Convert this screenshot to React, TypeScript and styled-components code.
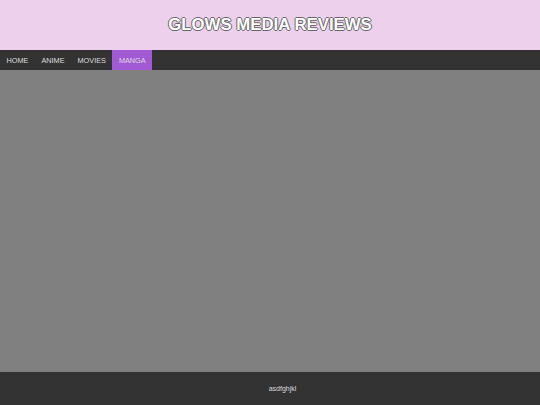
import React from "react";
import styled, { createGlobalStyle } from "styled-components";

const Global = createGlobalStyle`
  html, body { margin: 0; padding: 0; height: 100%; }
  body { font-family: "Liberation Sans", Arial, sans-serif; }
  #root { height: 100%; }
`;

const Page = styled.div`
  display: flex;
  flex-direction: column;
  height: 405px;
  width: 540px;
`;

const Header = styled.header`
  height: 50px;
  background: #ecd0ec;
  display: flex;
  align-items: center;
  justify-content: center;
`;

const Title = styled.h1`
  margin: 0;
  font-size: 16.8px;
  font-weight: bold;
  color: #ffffff;
  text-shadow: -1px 0 #666, 1px 0 #666, 0 -1px #666, 0 1px #666;
`;

const Nav = styled.nav`
  height: 20px;
  background: #333333;
  display: flex;
`;

const NavItem = styled.a<{ $active?: boolean }>`
  display: flex;
  align-items: center;
  padding: 0 6.5px;
  font-size: 7.3px;
  font-weight: normal;
  color: #dddddd;
  text-decoration: none;
  background: ${(p) => (p.$active ? "#a259d4" : "transparent")};
`;

const Main = styled.main`
  flex: 1;
  background: #808080;
`;

const Footer = styled.footer`
  height: 33px;
  background: #333333;
  display: flex;
  align-items: center;
  justify-content: center;
  padding-left: 25px;
  font-size: 7px;
  color: #dddddd;
`;

export default function App() {
  return (
    <>
      <Global />
      <Page>
        <Header>
          <Title>GLOWS MEDIA REVIEWS</Title>
        </Header>
        <Nav>
          <NavItem>HOME</NavItem>
          <NavItem>ANIME</NavItem>
          <NavItem>MOVIES</NavItem>
          <NavItem $active>MANGA</NavItem>
        </Nav>
        <Main />
        <Footer>asdfghjkl</Footer>
      </Page>
    </>
  );
}
